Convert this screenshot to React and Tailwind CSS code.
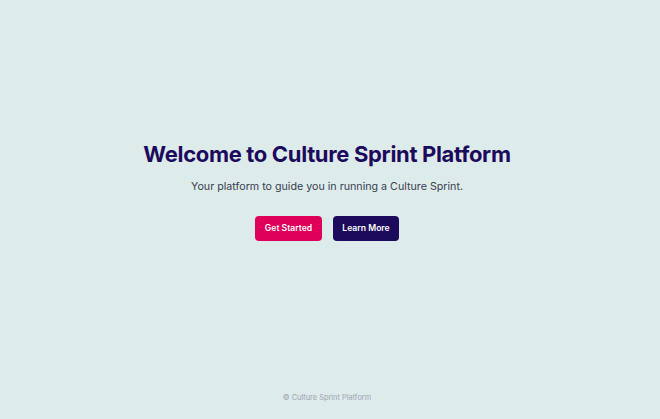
export default function App() {
  return (
    <div className="min-h-screen flex flex-col bg-[#deebeb] pr-[6px]" style={{ fontFamily: 'Inter, "Noto Sans", sans-serif' }}>
      <main className="flex-1 flex flex-col items-center justify-center text-center">
        <h1 className="text-[22px] leading-[28px] font-bold text-[#1c0a5c] tracking-[-0.015em]">
          Welcome to Culture Sprint Platform
        </h1>
        <p className="mt-[12px] text-[10.7px] leading-[14px] text-[#374151]">
          Your platform to guide you in running a Culture Sprint.
        </p>
        <div className="mt-[22px] flex gap-[11px]">
          <button className="w-[67px] h-[25px] rounded-[4px] bg-[#df0059] text-white text-[8.6px] font-semibold">
            Get Started
          </button>
          <button className="w-[66px] h-[25px] rounded-[4px] bg-[#1c0a5c] text-white text-[8.6px] font-semibold">
            Learn More
          </button>
        </div>
      </main>
      <footer className="pt-[12px] pb-[16px] text-center text-[7.4px] leading-[10px] text-[#9ca3af]">
        © Culture Sprint Platform
      </footer>
    </div>
  );
}
